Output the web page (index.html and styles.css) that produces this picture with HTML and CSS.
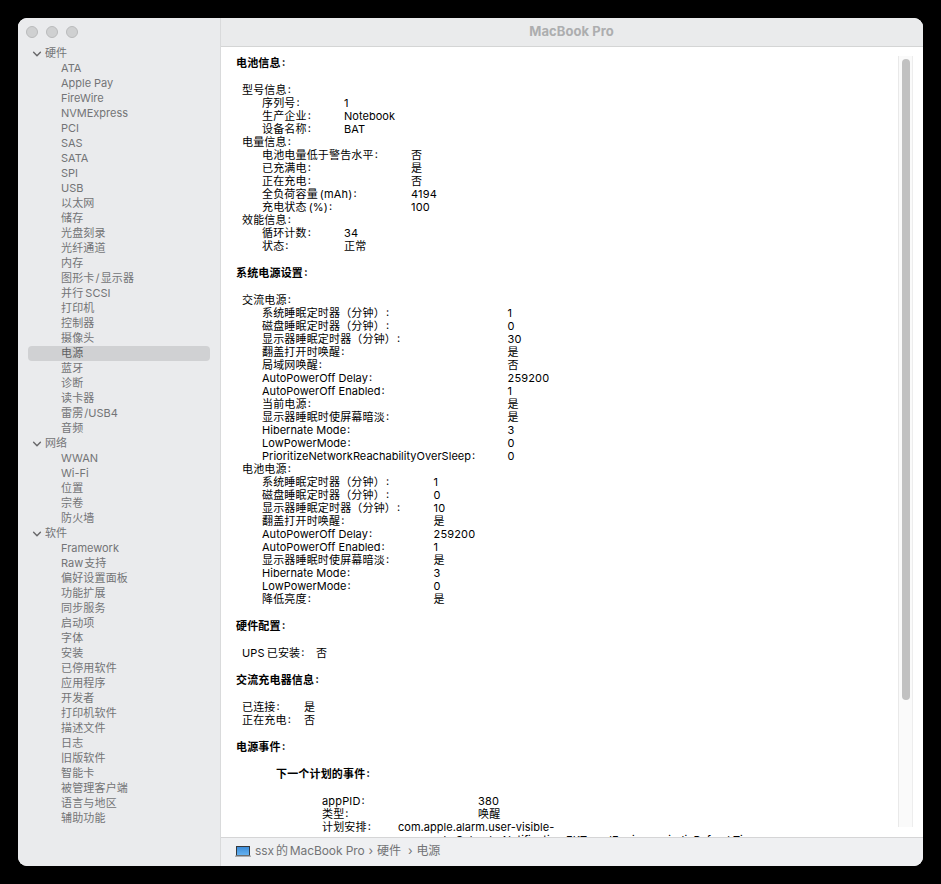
FILE: index.html
```html
<!DOCTYPE html>
<html lang="zh-CN">
<head>
<meta charset="utf-8">
<title>MacBook Pro</title>
<link rel="stylesheet" href="styles.css">
</head>
<body>
<div class="window">
  <aside class="sidebar">
    <div class="lights"><i></i><i></i><i></i></div>
    <nav>
      <div class="group"><svg class="chev" viewBox="0 0 10 8"><path d="M1.6 2.2 5 5.8 8.4 2.2"/></svg>硬件</div>
      <ul>
        <li class="en">ATA</li><li class="en">Apple Pay</li><li class="en">FireWire</li><li class="en">NVMExpress</li><li class="en">PCI</li><li class="en">SAS</li><li class="en">SATA</li><li class="en">SPI</li><li class="en">USB</li>
        <li>以太网</li><li>储存</li><li>光盘刻录</li><li>光纤通道</li><li>内存</li><li>图形卡<span class="hair"></span>/<span class="hair"></span>显示器</li><li>并行<span class="thin"></span><span class="en">SCSI</span></li><li>打印机</li><li>控制器</li><li>摄像头</li><li class="selected">电源</li><li>蓝牙</li><li>诊断</li><li>读卡器</li><li>雷雳<span class="hair"></span><span class="en">/USB4</span></li><li>音频</li>
      </ul>
      <div class="group"><svg class="chev" viewBox="0 0 10 8"><path d="M1.6 2.2 5 5.8 8.4 2.2"/></svg>网络</div>
      <ul>
        <li class="en">WWAN</li><li class="en">Wi-Fi</li><li>位置</li><li>宗卷</li><li>防火墙</li>
      </ul>
      <div class="group"><svg class="chev" viewBox="0 0 10 8"><path d="M1.6 2.2 5 5.8 8.4 2.2"/></svg>软件</div>
      <ul>
        <li class="en">Framework</li><li><span class="en">Raw</span><span class="hair"></span>支持</li><li>偏好设置面板</li><li>功能扩展</li><li>同步服务</li><li>启动项</li><li>字体</li><li>安装</li><li>已停用软件</li><li>应用程序</li><li>开发者</li><li>打印机软件</li><li>描述文件</li><li>日志</li><li>旧版软件</li><li>智能卡</li><li>被管理客户端</li><li>语言与地区</li><li>辅助功能</li>
      </ul>
    </nav>
  </aside>
  <main class="main">
    <header class="titlebar">MacBook Pro</header>
    <section class="content">
      <div class="report">
        <h2>电池信息<b>:</b></h2>
        <h3>型号信息<b>:</b></h3>
        <dl class="w82">
          <dt>序列号<b>:</b></dt><dd>1</dd>
          <dt>生产企业<b>:</b></dt><dd class="en">Notebook</dd>
          <dt>设备名称<b>:</b></dt><dd class="en">BAT</dd>
        </dl>
        <h3>电量信息<b>:</b></h3>
        <dl class="w149">
          <dt>电池电量低于警告水平<b>:</b></dt><dd>否</dd>
          <dt>已充满电<b>:</b></dt><dd>是</dd>
          <dt>正在充电<b>:</b></dt><dd>否</dd>
          <dt>全负荷容量<span class="thin"></span>(mAh)<b>:</b></dt><dd>4194</dd>
          <dt>充电状态<span class="thin"></span>(%)<b>:</b></dt><dd>100</dd>
        </dl>
        <h3>效能信息<b>:</b></h3>
        <dl class="w82">
          <dt>循环计数<b>:</b></dt><dd>34</dd>
          <dt>状态<b>:</b></dt><dd>正常</dd>
        </dl>
        <h2>系统电源设置<b>:</b></h2>
        <h3>交流电源<b>:</b></h3>
        <dl class="w245">
          <dt>系统睡眠定时器（分钟）<b>:</b></dt><dd>1</dd>
          <dt>磁盘睡眠定时器（分钟）<b>:</b></dt><dd>0</dd>
          <dt>显示器睡眠定时器（分钟）<b>:</b></dt><dd>30</dd>
          <dt>翻盖打开时唤醒<b>:</b></dt><dd>是</dd>
          <dt>局域网唤醒<b>:</b></dt><dd>否</dd>
          <dt class="en">AutoPowerOff Delay<b>:</b></dt><dd>259200</dd>
          <dt class="en">AutoPowerOff Enabled<b>:</b></dt><dd>1</dd>
          <dt>当前电源<b>:</b></dt><dd>是</dd>
          <dt>显示器睡眠时使屏幕暗淡<b>:</b></dt><dd>是</dd>
          <dt class="en">Hibernate Mode<b>:</b></dt><dd>3</dd>
          <dt class="en">LowPowerMode<b>:</b></dt><dd>0</dd>
          <dt class="en">PrioritizeNetworkReachabilityOverSleep<b>:</b></dt><dd>0</dd>
        </dl>
        <h3>电池电源<b>:</b></h3>
        <dl class="w171">
          <dt>系统睡眠定时器（分钟）<b>:</b></dt><dd>1</dd>
          <dt>磁盘睡眠定时器（分钟）<b>:</b></dt><dd>0</dd>
          <dt>显示器睡眠定时器（分钟）<b>:</b></dt><dd>10</dd>
          <dt>翻盖打开时唤醒<b>:</b></dt><dd>是</dd>
          <dt class="en">AutoPowerOff Delay<b>:</b></dt><dd>259200</dd>
          <dt class="en">AutoPowerOff Enabled<b>:</b></dt><dd>1</dd>
          <dt>显示器睡眠时使屏幕暗淡<b>:</b></dt><dd>是</dd>
          <dt class="en">Hibernate Mode<b>:</b></dt><dd>3</dd>
          <dt class="en">LowPowerMode<b>:</b></dt><dd>0</dd>
          <dt>降低亮度<b>:</b></dt><dd>是</dd>
        </dl>
        <h2>硬件配置<b>:</b></h2>
        <dl class="outer w74"><dt>UPS<span class="thin"></span>已安装<b>:</b></dt><dd>否</dd></dl>
        <h2>交流充电器信息<b>:</b></h2>
        <dl class="outer w62">
          <dt>已连接<b>:</b></dt><dd>是</dd>
          <dt>正在充电<b>:</b></dt><dd>否</dd>
        </dl>
        <h2>电源事件<b>:</b></h2>
        <h2 class="nested">下一个计划的事件<b>:</b></h2>
        <dl class="event w156">
          <dt>appPID<b>:</b></dt><dd>380</dd>
          <dt>类型<b>:</b></dt><dd>唤醒</dd>
        </dl>
        <dl class="event w76">
          <dt>计划安排<b>:</b></dt><dd class="en">com.apple.alarm.user-visible-<br>com.apple.CalendarNotification.EKTravelEngine.periodicRefreshTimer</dd>
        </dl>
      </div>
      <div class="scrollbar"><div class="thumb"></div></div>
    </section>
    <footer class="pathbar">
      <svg class="laptop" viewBox="0 0 16 12"><defs><linearGradient id="screen" x1="0" y1="0" x2="0" y2="1"><stop offset="0" stop-color="#3a8bd8"/><stop offset="1" stop-color="#67b3f0"/></linearGradient></defs><rect x="1.5" y="1.5" width="13" height="9" fill="url(#screen)" stroke="#34383c"/><rect x="0" y="10.5" width="16" height="1.4" fill="#a2a6a9"/></svg>
      <span>ssx<span class="thin"></span>的<span class="thin"></span>MacBook Pro</span><i class="sep s1">›</i><span>硬件</span><i class="sep s2">›</i><span>电源</span>
    </footer>
  </main>
</div>
</body>
</html>
```
FILE: styles.css
```css
* { box-sizing: border-box; }
body {
  margin: 0;
  padding: 18px;
  height: 884px;
  overflow: hidden;
  background: #000;
  font: 11px/13px Inter, "Noto Sans CJK SC", sans-serif;
  letter-spacing: .17px;
}
ul, dl, dd, h2, h3 { margin: 0; padding: 0; list-style: none; }
.en { letter-spacing: .03px; }
.window {
  display: flex;
  width: 905px;
  height: 848px;
  border-radius: 9px;
  overflow: hidden;
  background: #fff;
}
.sidebar {
  width: 203px;
  background: #eaebed;
  border-right: 1px solid #d9dadb;
  color: #737476;
  line-height: 15px;
}
.sidebar .en { letter-spacing: -.02px; }
.lights { display: flex; gap: 8px; padding: 8px 0 0 8px; height: 28px; }
.lights i {
  width: 12px;
  height: 12px;
  border-radius: 50%;
  background: #cfd0d1;
  border: 1px solid #b9babb;
}
.group { display: flex; align-items: center; height: 15px; padding-left: 14px; gap: 3px; letter-spacing: 0; }
.chev { width: 10px; height: 8px; fill: none; stroke: #69696b; stroke-width: 1.4; stroke-linecap: round; stroke-linejoin: round; }
.sidebar li { height: 15px; margin: 0 10px; padding-left: 33px; border-radius: 4px; white-space: nowrap; }
.sidebar .selected { background: #d0d1d3; color: #5e5f61; }
.thin { display: inline-block; width: 2px; }
.hair { display: inline-block; width: 1px; }
.main { flex: 1; display: flex; flex-direction: column; min-width: 0; }
.titlebar {
  height: 29px;
  background: #eaebec;
  border-bottom: 1px solid #d4d5d5;
  color: #adaeaf;
  font-size: 13px;
  line-height: 27px;
  font-weight: 700;
  letter-spacing: .05px;
  text-align: center;
  padding-right: 1px;
}
.content { flex: 1; min-height: 0; display: flex; justify-content: space-between; overflow: hidden; }
.report { padding: 10px 0 0 15px; color: #000; white-space: nowrap; font-weight: 400; }
.report b { margin-left: 1px; font-weight: inherit; position: relative; top: -1px; }
h2 { font-size: 11px; font-weight: 700; height: 13px; margin: 14px 0; }
h2:first-child { margin-top: 0; }
h2.nested { padding-left: 40px; }
h3 { font-size: 11px; font-weight: 400; height: 13px; padding-left: 6px; }
dl { display: grid; grid-auto-rows: 13px; padding-left: 26px; }
dl.outer { padding-left: 6px; }
dl.event { padding-left: 86px; }
.w62 { grid-template-columns: 62px auto; }
.w74 { grid-template-columns: 74px auto; }
.w76 { grid-template-columns: 76px auto; }
.w82 { grid-template-columns: 82px auto; }
.w149 { grid-template-columns: 149px auto; }
.w156 { grid-template-columns: 156px auto; }
.w171 { grid-template-columns: 171.5px auto; }
.w245 { grid-template-columns: 245.5px auto; }
.scrollbar {
  width: 15px;
  margin: 9px 10px 10px 0;
  padding: 3px 3px 0;
  background: #fafafa;
  border-left: 1px solid #e9e9e9;
  border-right: 1px solid #ededed;
  flex: none;
}
.thumb { width: 8px; height: 641px; border-radius: 4px; background: #c1c1c1; }
.pathbar {
  height: 29px;
  flex: none;
  display: flex;
  align-items: center;
  padding: 0 0 3px 14px;
  background: #eff0f2;
  border-top: 1px solid #d5d5d6;
  color: #737476;
  font-size: 12px;
  letter-spacing: -.1px;
}
.laptop { width: 16px; height: 12px; margin-right: 4px; }
.sep { font-style: normal; }
.s1 { margin: 0 4px; }
.s2 { margin: 0 4px 0 7px; }
```
